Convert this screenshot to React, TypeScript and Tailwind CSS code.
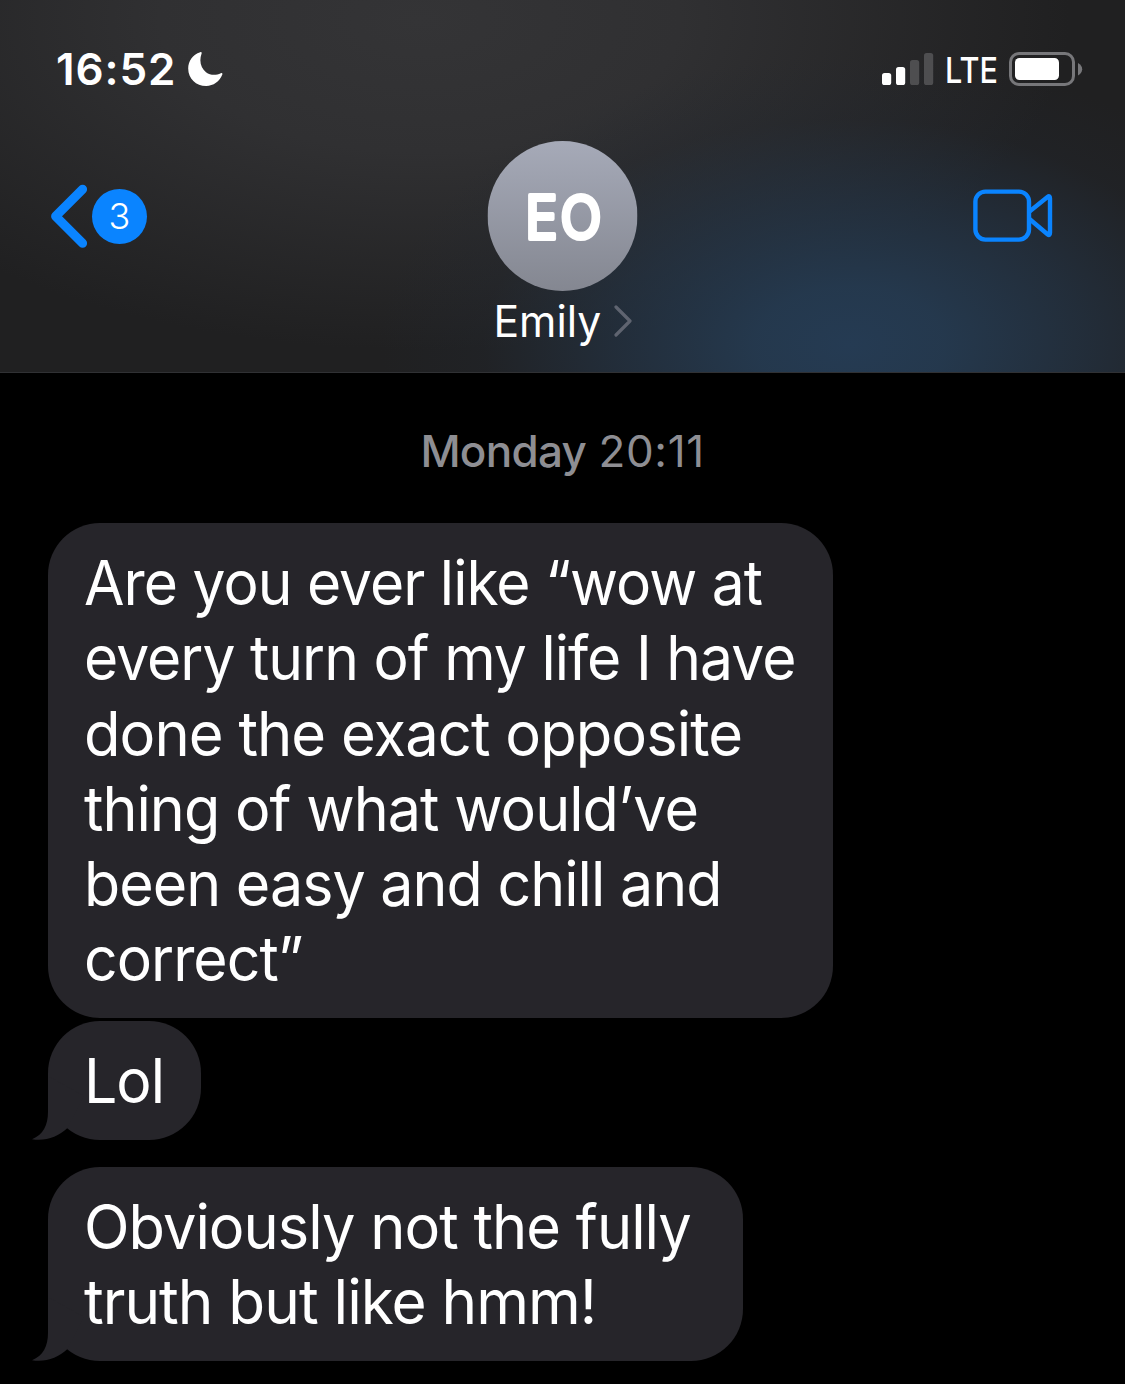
import type { ReactNode } from "react";

type Line = {
    text: string;
    scale: string;
};

type Message = {
    id: number;
    lines: Line[];
    size: string;
    tail?: boolean;
};

const messages: Message[] = [
    {
        id: 1,
        size: "w-[785px] h-[495px]",
        lines: [
            { text: "Are you ever like “wow at", scale: "scale-x-[0.956]" },
            { text: "every turn of my life I have", scale: "scale-x-[0.957]" },
            { text: "done the exact opposite", scale: "scale-x-[0.973]" },
            { text: "thing of what would’ve", scale: "scale-x-[0.965]" },
            { text: "been easy and chill and", scale: "scale-x-[0.963]" },
            { text: "correct”", scale: "scale-x-[0.959]" },
        ],
    },
    {
        id: 2,
        size: "mt-[3px] w-[153px] h-[119px]",
        tail: true,
        lines: [{ text: "Lol", scale: "scale-x-[0.96]" }],
    },
    {
        id: 3,
        size: "mt-[27px] w-[695px] h-[194px]",
        tail: true,
        lines: [
            { text: "Obviously not the fully", scale: "scale-x-[0.97]" },
            { text: "truth but like hmm!", scale: "scale-x-[0.981]" },
        ],
    },
];

function StatusBar() {
    return (
        <div className="flex h-[34px] items-center justify-between pr-[42px] pl-[56px]">
            <div className="flex items-center">
                <span className="w-[132px] text-[44px] leading-[36px] font-semibold tracking-[0.9px] whitespace-nowrap">16:52</span>
                <svg className="h-[34px] w-[35px]" viewBox="0 0 35 34" fill="white">
                    <path d="M12.2 0.2C13.4 -0.2 14 0.5 13.6 1.5C10.8 9.5 13 16.4 18 20.2C22.5 23.5 28 23.5 32.8 21.2C34 20.7 34.8 21.4 34.3 22.6C31.6 29.6 25.4 34 18.2 34C8 34 0.2 26.4 0.2 16.4C0.2 9 4.6 2.6 12.2 0.2Z" />
                </svg>
            </div>
            <div className="flex items-center">
                <svg className="h-[34px] w-[52px]" viewBox="0 0 52 34">
                    <rect x="0" y="21" width="9.2" height="12" rx="2.6" fill="white" />
                    <rect x="14" y="15" width="9.2" height="18" rx="2.6" fill="white" />
                    <rect x="28" y="8" width="9.2" height="25" rx="2.6" fill="#4e4e50" />
                    <rect x="42" y="1" width="9.2" height="32" rx="2.6" fill="#4e4e50" />
                </svg>
                <span className="ml-[11px] w-[53px] origin-left scale-x-[0.85] pt-[2px] text-[36px] leading-[36px] font-medium whitespace-nowrap">LTE</span>
                <svg className="ml-[11px] h-[34px] w-[74px]" viewBox="0 0 74 34">
                    <rect x="1.5" y="1.5" width="63" height="31" rx="8.5" fill="none" stroke="#77777a" strokeWidth="3" />
                    <rect x="6" y="6" width="44" height="22" rx="4.5" fill="white" />
                    <path d="M69 11C71.6 12.4 73.2 14.6 73.2 17.2C73.2 19.8 71.6 22 69 23.4Z" fill="#77777a" />
                </svg>
            </div>
        </div>
    );
}

function NavBar() {
    return (
        <div className="mt-[55px] grid grid-cols-3 pr-[72px] pl-[50px]">
            <div className="mt-[43px] flex h-[64px] items-center">
                <svg className="h-[64px] w-[38px]" viewBox="0 0 38 64" fill="none" stroke="#0a84ff" strokeWidth="9" strokeLinecap="round" strokeLinejoin="round">
                    <path d="M32.6 5.2L5.6 32.3L32.6 59.2" />
                </svg>
                <span className="ml-[4px] flex h-[55px] w-[55px] items-center justify-center rounded-full bg-[#0a84ff] text-[36px] leading-none font-[350]">
                    3
                </span>
            </div>
            <div className="-mx-10 flex translate-x-[11.5px] flex-col items-center">
                <svg className="h-[150px] w-[150px]" viewBox="0 0 150 150">
                    <defs>
                        <linearGradient id="avatar" x1="0" y1="0" x2="0" y2="1">
                            <stop offset="0" stopColor="#a6aab8" />
                            <stop offset="1" stopColor="#848791" />
                        </linearGradient>
                    </defs>
                    <circle cx="75" cy="75" r="75" fill="url(#avatar)" />
                    <text
                        transform="translate(77.2 98) scale(0.9 1)"
                        textAnchor="middle"
                        fill="white"
                        stroke="white"
                        strokeWidth="4.2"
                        strokeLinejoin="round"
                        className="text-[60px] font-normal tracking-[3px]"
                    >
                        EO
                    </text>
                </svg>
                <div className="mt-[4px] flex h-[52px] items-center">
                    <span className="w-[107px] origin-left scale-x-[0.98] text-[43.5px] leading-[50px] -mt-px whitespace-nowrap">Emily</span>
                    <svg className="ml-[13px] h-[32px] w-[19px]" viewBox="0 0 19 32" fill="none" stroke="#5f6470" strokeWidth="3.2" strokeLinecap="round" strokeLinejoin="round">
                        <path d="M2.5 2L16.5 16L2.5 30" />
                    </svg>
                </div>
            </div>
            <div className="mt-[47px] flex justify-end">
                <svg className="h-[56px] w-[80px]" viewBox="0 0 80 56" fill="none" stroke="#0a84ff" strokeWidth="4.4" strokeLinejoin="round">
                    <rect x="2.4" y="3.6" width="53.6" height="48" rx="10" />
                    <path d="M56.5 23.5L74.5 9Q77 7 77 10.5V44.8Q77 48.2 74.5 46.2L56.5 31" />
                </svg>
            </div>
        </div>
    );
}

function Bubble({ size, tail, children }: { size: string; tail?: boolean; children: ReactNode }) {
    return (
        <div className={`relative rounded-[52px] bg-[#26252a] pt-[23.2px] pl-[36.4px] ${size}`}>
            {tail && (
                <svg className="absolute bottom-0 left-[-16px] h-[64px] w-[64px]" viewBox="0 0 64 64" fill="#26252a">
                    <path d="M16 0V36C16 49 11 59 0 63.2C13 65.5 26 61 35.2 52.3L52 20Z" />
                </svg>
            )}
            <div className="relative">{children}</div>
        </div>
    );
}

export default function App() {
    return (
        <div className="h-[1384px] w-[1125px] overflow-hidden bg-black font-['Inter',sans-serif] text-white">
            <header className="h-[373px] border-b border-[#303134] bg-[radial-gradient(ellipse_470px_290px_at_850px_345px,#253b53_0%,#253b52e6_20%,#24364a99_50%,#22293340_78%,transparent_100%),radial-gradient(ellipse_650px_330px_at_420px_20px,#343436_0%,#303032_40%,transparent_100%)] bg-[#202021] pt-[52px]">
                <StatusBar />
                <NavBar />
            </header>
            <main className="px-[48px] pt-[52px]">
                <p className="mb-[46px] h-[52px] text-center text-[44px] leading-[53px] text-[#8e8e93]">
                    <span className="font-medium tracking-[-0.7px]">Monday</span> <span className="tracking-[0.6px]">20:11</span>
                </p>
                {messages.map((message) => (
                    <Bubble key={message.id} size={message.size} tail={message.tail}>
                        {message.lines.map((line) => (
                            <p key={line.text} className={`origin-left text-[61.4px] leading-[75.2px] tracking-[-1px] whitespace-nowrap ${line.scale}`}>
                                {line.text}
                            </p>
                        ))}
                    </Bubble>
                ))}
            </main>
        </div>
    );
}
